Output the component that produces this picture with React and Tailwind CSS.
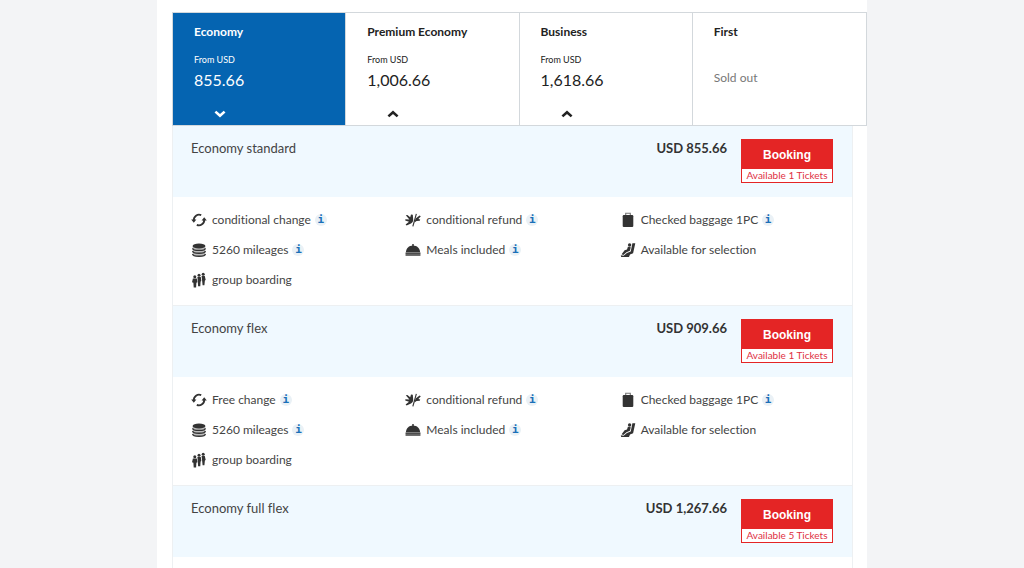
import React, { useState } from 'react';
import clsx from 'clsx';

const cabins = [
  { name: 'Economy', price: '855.66' },
  { name: 'Premium Economy', price: '1,006.66' },
  { name: 'Business', price: '1,618.66' },
  { name: 'First', price: null },
];

const common = [
  { icon: 'refund', text: 'conditional refund', info: true },
  { icon: 'bag', text: 'Checked baggage 1PC', info: true },
  { icon: 'miles', text: '5260 mileages', info: true },
  { icon: 'meal', text: 'Meals included', info: true },
  { icon: 'seat', text: 'Available for selection' },
  { icon: 'group', text: 'group boarding' },
];

const fares = [
  {
    name: 'Economy standard',
    price: 'USD 855.66',
    tickets: 1,
    features: [{ icon: 'change', text: 'conditional change', info: true }, ...common],
  },
  {
    name: 'Economy flex',
    price: 'USD 909.66',
    tickets: 1,
    features: [{ icon: 'change', text: 'Free change', info: true }, ...common],
  },
  { name: 'Economy full flex', price: 'USD 1,267.66', tickets: 5, features: [] },
];

const icons = {
  change: (
    <>
      <g fill="none" stroke="currentColor" strokeWidth="1.9">
        <path d="M2.8 8.4A5.3 5.3 0 0 1 10.2 3.1" />
        <path d="M13.2 7.6A5.3 5.3 0 0 1 5.8 12.9" />
      </g>
      <path d="M.2 7.4h5.2L2.8 10.8zM10.6 8.6h5.2L13.2 5.2z" />
    </>
  ),
  refund: (
    <>
      <path d="M.8 3.2l1.6-.2 2.8 2.2.8-2.6 1.8.2.4 5.2c0 1.4-.8 2.6-2.2 3.4L1.6 13.4l-1-.9 3.4-2.7L.2 8.4l.2-1.2 4 .4z" />
      <path d="M10.8 1.8l1.1.3-3.5 12.4-1.1-.3z" />
      <path d="M10.6 6.6l4-3.2 1.2.8-2.4 2.8 1.8.6-.4 1.2-3.2.2-2.2 1.4z" />
    </>
  ),
  bag: (
    <>
      <path d="M5.7 3.4V1.3h4.6v2.1" fill="none" stroke="#777" strokeWidth="1.1" />
      <rect x="2.7" y="3.1" width="10.6" height="12" rx="1.1" />
    </>
  ),
  miles: (
    <>
      <path d="M1.7 4v8.2c0 1.2 2.8 2.3 6.3 2.3s6.3-1.1 6.3-2.3V4z" fill="#bbb" />
      <ellipse cx="8" cy="4" rx="6.4" ry="2.5" />
      <path
        d="M1.7 6.2c0 1.2 2.8 2.2 6.3 2.2s6.3-1 6.3-2.2M1.7 9.1c0 1.2 2.8 2.2 6.3 2.2s6.3-1 6.3-2.2M1.7 12c0 1.2 2.8 2.2 6.3 2.2s6.3-1 6.3-2.2"
        fill="none"
        stroke="currentColor"
        strokeWidth="1.4"
      />
    </>
  ),
  meal: (
    <>
      <circle cx="8" cy="3" r="1" />
      <path d="M.9 10.4C.9 6.2 4 3.4 8 3.4s7.1 2.8 7.1 7z" />
      <path d="M.6 10.4h14.8v3.4H.6z" fill="#999" />
      <path d="M.6 10.8h14.8v.9H.6zM.6 12.6h14.8v1H.6z" />
    </>
  ),
  seat: (
    <>
      <circle cx="9.6" cy="3" r="1.7" />
      <path d="M7.9 4.8l2.9.5-.9 3.5-3.4 1.4-3.2 2.9-1.7-.8 3-4 2.4-.7z" />
      <path d="M12.4 1.3h2.9l-2.2 10-3.1 1.2-1 2.6H1.2L.8 13.2l2.8.6 3.3-2.9 3.8-1.5z" />
    </>
  ),
  group: (
    <>
      <circle cx="3.8" cy="4.8" r="1.5" />
      <circle cx="8" cy="3.2" r="1.5" />
      <circle cx="12.2" cy="2.2" r="1.5" />
      <path d="M1.9 6.4h3.9l.6 3.9-1 .4-.3 4.7H2.7l-.3-4.7-1.4-.4zM6.4 4.9h3.4l.5 4.2-.7.4-.3 4.7H7.1l-.3-4.7zM10.6 3.9h3.2l.9 4.2-.8.4-.5 4.8h-1.8l-.5-4.8z" />
    </>
  ),
};

function FeatureIcon({ name }) {
  return (
    <svg viewBox="0 0 16 16" className="size-4 shrink-0 text-[#333]" fill="currentColor" aria-hidden="true">
      {icons[name]}
    </svg>
  );
}

function Chevron({ down }) {
  return (
    <svg viewBox="0 0 12 8" className="w-3 h-2" fill="none" stroke="currentColor" strokeWidth="2.6" aria-hidden="true">
      <path d={down ? 'M1.4 1.6L6 5.8L10.6 1.6' : 'M1.4 6.4L6 2.2L10.6 6.4'} />
    </svg>
  );
}

function CabinTab({ cabin, active, onSelect }) {
  return (
    <button
      type="button"
      onClick={onSelect}
      disabled={!cabin.price}
      className={clsx(
        'flex flex-col items-start text-left pl-[21px] pt-[11px] border-r border-[#d3d8dc] last:border-r-0',
        active ? 'bg-[#0564b1] text-white' : 'bg-white text-[#222]'
      )}
    >
      <span className="text-xs leading-4 font-bold">{cabin.name}</span>
      {cabin.price ? (
        <>
          <span className="mt-[14px] text-[9px] leading-3">From USD</span>
          <span className="mt-1 text-base leading-5">{cabin.price}</span>
          <span className="mt-5 ml-5">
            <Chevron down={active} />
          </span>
        </>
      ) : (
        <span className="mt-[30px] text-xs leading-4 text-[#777]">Sold out</span>
      )}
    </button>
  );
}

function Feature({ item }) {
  return (
    <li className="flex items-center h-[30px] text-xs leading-4 text-[#444]">
      <FeatureIcon name={item.icon} />
      <span className="ml-[5px]">{item.text}</span>
      {item.info && (
        <button
          type="button"
          aria-label={'About ' + item.text}
          className="ml-1 size-3 rounded-full bg-[#eaf1f6] flex items-center justify-center text-[11px] leading-3 font-bold text-[#1a6fb8] font-['DejaVu_Sans_Mono',monospace]"
        >
          i
        </button>
      )}
    </li>
  );
}

function Fare({ fare }) {
  return (
    <section className="border border-b-0 border-[#edf0f2]">
      <div className="flex items-start h-[71px] pl-[18px] pr-[19px] pt-[13px] bg-[#f0f9ff]">
        <h2 className="text-[13px] leading-[18px] text-[#444]">{fare.name}</h2>
        <p className="ml-auto text-[13px] leading-[18px] font-bold text-[#333]">{fare.price}</p>
        <div className="ml-[14px] w-[92px] border border-[#e42525] bg-white">
          <button type="button" className="block w-full h-[29px] bg-[#e42525] text-white text-xs font-bold font-['Liberation_Sans',sans-serif]">
            Booking
          </button>
          <p className="text-center text-[10px] leading-[13px] text-[#e0303f] whitespace-nowrap">Available {fare.tickets} Tickets</p>
        </div>
      </div>
      <ul className="grid grid-cols-3 px-[18px] pt-2 pb-[10px]">
        {fare.features.map((item) => (
          <Feature key={item.text} item={item} />
        ))}
      </ul>
    </section>
  );
}

export default function App() {
  const [selected, setSelected] = useState('Economy');

  return (
    <div className="min-h-screen bg-[#f3f4f6] font-['Lato',sans-serif] [font-variant-ligatures:none]">
      <main className="max-w-[710px] min-h-screen mx-auto bg-white pl-[15px] pt-3">
        <div className="relative -mb-px grid grid-cols-4 h-[114px] border border-[#d3d8dc]">
          {cabins.map((cabin) => (
            <CabinTab
              key={cabin.name}
              cabin={cabin}
              active={selected === cabin.name}
              onSelect={() => setSelected(cabin.name)}
            />
          ))}
        </div>
        <div className="mr-[14px]">
          {fares.map((fare) => (
            <Fare key={fare.name} fare={fare} />
          ))}
        </div>
      </main>
    </div>
  );
}
